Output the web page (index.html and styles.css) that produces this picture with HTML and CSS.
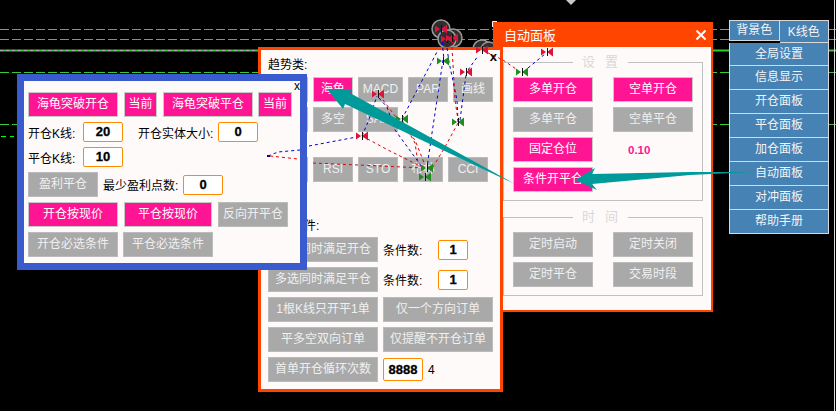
FILE: index.html
```html
<!DOCTYPE html>
<html>
<head>
  <meta charset="utf-8">
  <title>自动面板</title>
  <link rel="stylesheet" href="styles.css">
</head>
<body>
<div id="desk">

  <!-- chart behind the windows -->
  <svg class="layer" width="836" height="411">
    <g class="grid-line">
      <line x1="0" y1="29.5" x2="836" y2="29.5"/>
      <line x1="0" y1="39.5" x2="836" y2="39.5"/>
      <line x1="0" y1="72.5" x2="836" y2="72.5"/>
      <line x1="0" y1="124.5" x2="836" y2="124.5"/>
    </g>
    <line class="grid-bright" x1="0" y1="50.5" x2="836" y2="50.5"/>
    <line class="grid-dots" x1="0" y1="50.5" x2="260" y2="50.5"/>
    <line class="grid-short" x1="1" y1="136.5" x2="14" y2="136.5"/>
    <line class="axis" x1="834.5" y1="0" x2="834.5" y2="411"/>
    <polygon class="top-mark" points="566,0 576,0 571,5"/>
    <g class="circles">
      <circle cx="441" cy="29" r="9"/>
      <circle cx="453" cy="38" r="9"/>
      <circle cx="447" cy="39" r="9"/>
      <circle cx="482" cy="49" r="9"/>
      <circle cx="489" cy="50" r="8"/>
    </g>
    <path class="corner" d="M492.5 27V21.5H497"/>
  </svg>

  <div id="autoPanel" class="win">
    <div class="win-title">
      <span>自动面板</span>
      <svg class="win-close" width="10" height="10"><path d="M0.5 0.5L9.5 9.5M9.5 0.5L0.5 9.5"/></svg>
    </div>
    <fieldset class="group">
      <legend>设置</legend>
      <div class="group-grid">
        <div class="btn on">多单开仓</div>
        <div class="btn on">空单开仓</div>
        <div class="btn">多单平仓</div>
        <div class="btn">空单平仓</div>
        <div class="btn on">固定仓位</div>
        <div class="lots">0.10</div>
        <div class="btn on">条件开平仓</div>
      </div>
    </fieldset>
    <fieldset class="group">
      <legend>时间</legend>
      <div class="group-grid">
        <div class="btn">定时启动</div>
        <div class="btn">定时关闭</div>
        <div class="btn">定时平仓</div>
        <div class="btn">交易时段</div>
      </div>
    </fieldset>
  </div>

  <div id="menu">
    <div class="menu-top">
      <div class="menu-item">背景色</div>
      <div class="menu-item">K线色</div>
    </div>
    <div class="menu-item">全局设置</div>
    <div class="menu-item">信息显示</div>
    <div class="menu-item">开仓面板</div>
    <div class="menu-item">平仓面板</div>
    <div class="menu-item">加仓面板</div>
    <div class="menu-item">自动面板</div>
    <div class="menu-item">对冲面板</div>
    <div class="menu-item">帮助手册</div>
  </div>

  <div id="condPanel" class="win">
    <span class="x">x</span>
    <div class="cap first">趋势类:</div>
    <div class="row">
      <div class="btn w40"></div>
      <div class="btn on w40">海龟</div>
      <div class="btn w45">MACD</div>
      <div class="btn w40">PAR</div>
      <div class="btn w40">画线</div>
    </div>
    <div class="row">
      <div class="btn w40"></div>
      <div class="btn w40">多空</div>
      <div class="btn w40">SAR</div>
    </div>
    <div class="cap"></div>
    <div class="row">
      <div class="btn w40"></div>
      <div class="btn w40">RSI</div>
      <div class="btn w40">STO</div>
      <div class="btn w40">布林</div>
      <div class="btn w40">CCI</div>
    </div>
    <div class="cap multi">多选条件:</div>
    <div class="row">
      <div class="btn w110">多选同时满足开仓</div>
      <span class="lbl w50">条件数:</span>
      <div class="num w30">1</div>
    </div>
    <div class="row">
      <div class="btn w110">多选同时满足平仓</div>
      <span class="lbl w50">条件数:</span>
      <div class="num w30">1</div>
    </div>
    <div class="row">
      <div class="btn w110">1根K线只开平1单</div>
      <div class="btn w110">仅一个方向订单</div>
    </div>
    <div class="row">
      <div class="btn w110">平多空双向订单</div>
      <div class="btn w110">仅提醒不开仓订单</div>
    </div>
    <div class="row">
      <div class="btn w110">首单开仓循环次数</div>
      <div class="num w40 tall">8888</div>
      <span class="lbl">4</span>
    </div>
  </div>

  <div id="turtlePanel" class="win">
    <span class="x">x</span>
    <div class="row wide">
      <div class="btn on w90">海龟突破开仓</div>
      <div class="btn on w33">当前</div>
      <div class="btn on w90">海龟突破平仓</div>
      <div class="btn on w34 pull">当前</div>
    </div>
    <div class="row field">
      <span class="lbl w55">开仓K线:</span>
      <div class="num w40">20</div>
      <span class="lbl w80 push">开仓实体大小:</span>
      <div class="num w40">0</div>
    </div>
    <div class="row field">
      <span class="lbl w55">平仓K线:</span>
      <div class="num w40">10</div>
    </div>
    <div class="row">
      <div class="btn w70">盈利平仓</div>
      <span class="lbl w80">最少盈利点数:</span>
      <div class="num w40">0</div>
    </div>
    <div class="row wide">
      <div class="btn on w90">开仓按现价</div>
      <div class="btn on w88">平仓按现价</div>
      <div class="btn w70">反向开平仓</div>
    </div>
    <div class="row">
      <div class="btn w90">开仓必选条件</div>
      <div class="btn w90">平仓必选条件</div>
    </div>
  </div>

  <!-- trade lines and arrows over the windows -->
  <svg class="layer" width="836" height="411">
    <defs>
      <g id="markRed">
        <path d="M-6 -3.5L-1 0L-6 3.5ZM6 -4.5L0 0L6 4.5Z" fill="#dc143c"/>
        <path d="M0.5 -4V4" stroke="#111" stroke-width="1"/>
      </g>
      <g id="markGreen">
        <path d="M-6 -3.5L-1 0L-6 3.5ZM6 -4.5L0 0L6 4.5Z" fill="#228b22"/>
        <path d="M0.5 -4V4" stroke="#111" stroke-width="1"/>
      </g>
    </defs>
    <g class="trade blue">
      <path d="M268 156L278 152L300 150"/>
      <path d="M309 146L362 136L368 122L377 96"/>
      <path d="M379 98L387 107L395 130L422 167"/>
      <path d="M402 119L438 50"/>
      <path d="M443 60L432 133L427 167"/>
      <path d="M447 48L449 62L457 100L458 122"/>
      <path d="M460 120L466 75"/>
      <path d="M468 70L478 56"/>
      <path d="M528 68L545 54"/>
      <path d="M441 30L444 60"/>
    </g>
    <g class="trade red">
      <path d="M270 156L298 159"/>
      <path d="M313 163L425 168"/>
      <path d="M362 136L388 150L422 167"/>
      <path d="M383 100L402 125L415 140L425 165"/>
      <path d="M402 120L415 143L418 163"/>
      <path d="M452 47L455 100L458 120"/>
      <path d="M458 123L445 147L433 167"/>
      <path d="M482 50L503 60"/>
      <path d="M503 60L516 69"/>
    </g>
    <rect x="267" y="155" width="3" height="2" fill="#0000cd"/>
    <use href="#markRed" x="441" y="29"/>
    <use href="#markRed" x="447" y="39"/>
    <use href="#markRed" x="452" y="38"/>
    <use href="#markRed" x="482" y="50"/>
    <use href="#markGreen" x="443" y="61"/>
    <use href="#markRed" x="466" y="72"/>
    <use href="#markRed" x="378" y="94"/>
    <use href="#markGreen" x="402" y="119"/>
    <use href="#markGreen" x="458" y="122"/>
    <use href="#markRed" x="362" y="136"/>
    <use href="#markGreen" x="427" y="168"/>
    <use href="#markGreen" x="425" y="177"/>
    <use href="#markGreen" x="522" y="72"/>
    <use href="#markRed" x="547" y="52"/>
    <polygon class="arrow" points="327,89 352,89 350,93 515,184 345,104 343,109"/>
    <polygon class="arrow" points="575,180 595,168 592,174 690,172 753,172 690,175 592,184 597,190"/>
  </svg>

</div>
</body>
</html>
```

FILE: styles.css
```css
html, body {
  margin: 0;
  padding: 0;
  background: #000;
}

#desk {
  position: relative;
  width: 836px;
  height: 411px;
  overflow: hidden;
  font-family: "Liberation Sans", "Noto Sans CJK SC", sans-serif;
  font-size: 12px;
  color: #000;
}

.layer {
  position: absolute;
  left: 0;
  top: 0;
}

/* chart */
.grid-line line {
  stroke: #32cd32;
  stroke-width: 1;
  stroke-dasharray: 9 3;
}
.grid-bright {
  stroke: #32cd32;
  stroke-width: 2;
}
.grid-dots {
  stroke: #aaa;
  stroke-width: 1;
  stroke-dasharray: 3 3;
}
.grid-short {
  stroke: #00ff00;
  stroke-width: 1;
  stroke-dasharray: 5 4;
}
.axis {
  stroke: #ddd;
  stroke-width: 1;
}
.top-mark {
  fill: #c8c8c8;
}
.circles circle {
  fill: #2e2e2e;
  stroke: #9a9a9a;
  stroke-width: 1.5;
}
.corner {
  fill: none;
  stroke: #fff;
  stroke-width: 1;
}
.trade path {
  fill: none;
  stroke-width: 1;
  stroke-dasharray: 3 3;
}
.trade.blue path {
  stroke: #0000cd;
}
.trade.red path {
  stroke: #e60000;
}
.arrow {
  fill: #009a9a;
}

/* windows */
.win {
  position: absolute;
  box-sizing: border-box;
  background: #fffafa;
}

#autoPanel {
  left: 493px;
  top: 22px;
  width: 220px;
  height: 290px;
  border: 2px solid #ff4500;
  border-top: 0;
}
.win-title {
  height: 25px;
  margin: 0 -2px;
  padding: 0 7px 0 11px;
  display: flex;
  justify-content: space-between;
  align-items: center;
  background: #ff4500;
  color: #fff;
  font-size: 13px;
}
.win-close path {
  stroke: #fff;
  stroke-width: 2;
  fill: none;
}

.group {
  box-sizing: border-box;
  width: 200px;
  margin: 7px 0 0 8px;
  padding: 0 0 8px 9px;
  border: 1px solid #c0c0c0;
  min-width: 0;
}
.group + .group {
  margin-top: 8px;
}
.group legend {
  margin-left: 60px;
  padding: 0 0 0 9px;
  height: 16px;
  line-height: 16px;
  font-size: 13px;
  letter-spacing: 10px;
  color: #d8d8d8;
}
.group-grid {
  display: grid;
  grid-template-columns: 80px 80px;
  column-gap: 20px;
  row-gap: 5px;
  margin-top: 7px;
}
.lots {
  display: flex;
  align-items: center;
  padding-left: 15px;
  color: #ff1493;
  font-weight: bold;
  font-size: 11.5px;
}

#condPanel {
  left: 258px;
  top: 47px;
  width: 245px;
  height: 345px;
  border: 3px solid #ff4500;
  padding: 0 7px;
}
#condPanel .x {
  top: 0;
  right: 3px;
  font-size: 13px;
  font-weight: bold;
}
#turtlePanel {
  left: 17px;
  top: 74px;
  width: 290px;
  height: 196px;
  border: 7px solid #3a5bcd;
  padding: 11px 4px;
}
#turtlePanel .row {
  margin-top: 5px;
}
#turtlePanel .row:nth-child(2) {
  margin-top: 0;
}
#turtlePanel .row.field {
  height: 20px;
}
#turtlePanel .row.field + .row.field {
  margin-top: 5px;
}
#turtlePanel .row.wide {
  column-gap: 6px;
}

.x {
  position: absolute;
  top: -2px;
  right: 0;
  font-size: 12px;
  line-height: 14px;
}

.cap {
  height: 14px;
  line-height: 14px;
  margin-top: 11px;
  margin-bottom: 0;
}
.cap.first {
  margin-top: 8px;
  margin-bottom: 5px;
}
.cap.multi {
  margin-top: 37px;
  margin-bottom: 4px;
}

.row {
  display: flex;
  align-items: center;
  column-gap: 5px;
}
.row + .row {
  margin-top: 5px;
}

.btn {
  box-sizing: border-box;
  height: 25px;
  line-height: 23px;
  text-align: center;
  white-space: nowrap;
  overflow: hidden;
  background: #a9a9a9;
  border: 1px solid #bbb;
  color: #f0f0f0;
}
.btn.on {
  background: #ff1493;
  border-color: #c8c8c8;
  color: #fff;
}

.num {
  box-sizing: border-box;
  height: 20px;
  line-height: 18px;
  text-align: center;
  background: #fff;
  border: 1px solid #ff8c00;
  border-radius: 2px;
  font-weight: bold;
  font-size: 13px;
  color: #000;
  -webkit-text-stroke: 0.3px #000;
}
.num.tall {
  height: 23px;
  line-height: 21px;
}
.lbl {
  white-space: nowrap;
}
.push {
  margin-left: 10px;
}
.pull {
  margin-left: -1px;
}

.w30 { width: 30px; }
.w33 { width: 33px; }
.w34 { width: 34px; }
.w40 { width: 40px; }
.w45 { width: 45px; }
.w50 { width: 45px; margin-right: 5px; }
.w55 { width: 50px; }
.w70 { width: 70px; }
.w80 { width: 75px; }
.w88 { width: 88px; }
.w90 { width: 90px; }
.w110 { width: 110px; }

/* menu on the right */
#menu {
  position: absolute;
  left: 729px;
  top: 20px;
  width: 100px;
}
.menu-top {
  display: flex;
}
.menu-top .menu-item {
  flex: 1;
  height: 21px;
  line-height: 19px;
}
.menu-item {
  box-sizing: border-box;
  height: 24px;
  line-height: 22px;
  text-align: center;
  background: #4682b4;
  border: 1px solid #d8d8d8;
  border-top-width: 0;
  color: #f4f4f4;
}
.menu-item:nth-child(2) {
  height: 23px;
  line-height: 22px;
  border-top-width: 0;
}
.menu-top .menu-item {
  border-top-width: 1px;
}
.menu-top .menu-item + .menu-item {
  border-left-width: 0;
}
```
